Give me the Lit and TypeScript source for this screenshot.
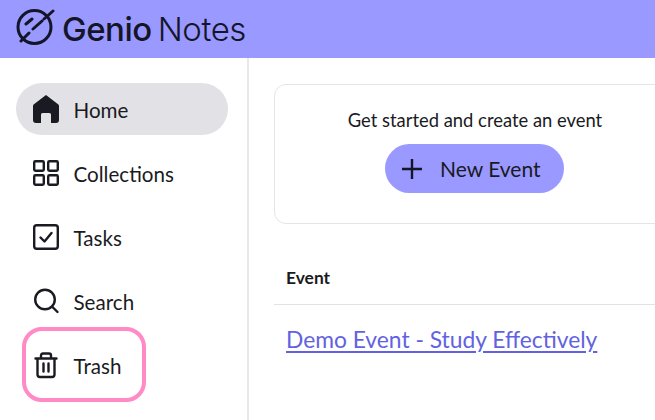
import { LitElement, html, css, svg } from "lit";
import { customElement } from "lit/decorators.js";

const ic = (body: unknown) => html`<svg class="ic" viewBox="0 0 26 26" fill="none" stroke="#1a1a22" stroke-width="2.4" stroke-linecap="round" stroke-linejoin="round">${body}</svg>`;

const items = [
  { label: "Home", active: true, icon: ic(svg`<path fill="#1a1a22" stroke="none" d="M13 -1 L25.4 8.5 Q26 9.2 26 10 V24 Q26 27 23 27 H18 V18.5 Q18 17 16.5 17 H9.5 Q8 17 8 18.5 V27 H3 Q0 27 0 24 V10 Q0 9.2 .6 8.5 Z"/>`) },
  { label: "Collections", icon: ic(svg`<rect x="1.2" y="1.2" width="9.6" height="9.6" rx="1.2"/><rect x="15.2" y="1.2" width="9.6" height="9.6" rx="1.2"/><rect x="1.2" y="15.2" width="9.6" height="9.6" rx="1.2"/><rect x="15.2" y="15.2" width="9.6" height="9.6" rx="1.2"/>`) },
  { label: "Tasks", icon: ic(svg`<rect x="1.2" y="1.2" width="23.6" height="23.6" rx="2.5"/><path d="M7.5 13.5 L11.5 17.5 L18.5 9"/>`) },
  { label: "Search", icon: ic(svg`<circle cx="12" cy="11.5" r="9.8"/><path d="M19 18.5 L24.5 24"/>`) },
  { label: "Trash", icon: ic(svg`<path d="M2.5 6.5 H23.5 M4.5 6.5 V22.5 Q4.5 25 7 25 H19 Q21.5 25 21.5 22.5 V6.5 M8 6 V3.5 Q8 1.5 10 1.5 H16 Q18 1.5 18 3.5 V6 M10.5 11.5 V19.5 M15.5 11.5 V19.5"/>`) },
];

@customElement("app-root")
export class AppRoot extends LitElement {
  static styles = css`
    :host { display: block; position: relative; width: 655px; height: 420px; overflow: hidden; background: #fff; color: #1a1a22; font-family: "Lato", "Noto Sans", sans-serif; }
    .header { height: 58px; background: #9999ff; display: flex; align-items: center; padding-left: 15px; gap: 7px; }
    .logo { width: 40px; height: 40px; flex: none; margin-top: -2px; }
    .brand { font-family: "Inter", sans-serif; font-size: 33px; color: #15152a; display: flex; gap: 6px; line-height: 1; }
    .brand b { font-weight: 500; letter-spacing: -0.5px; }
    .brand span { font-weight: 300; letter-spacing: -0.4px; }
    .body { display: flex; height: 362px; }
    .side { width: 249px; flex: none; box-sizing: border-box; border-right: 2px solid #e8e8ea; padding: 25px 19px 0 16px; display: flex; flex-direction: column; gap: 12px; }
    .item { height: 52px; border-radius: 26px; display: flex; align-items: center; gap: 14.5px; padding-left: 17px; font-size: 20.6px; }
    .item span { padding-top: 2px; }
    .item.active { background: #e2e2e6; }
    .ic { width: 26px; height: 26px; flex: none; overflow: visible; }
    .main { flex: none; width: 406px; padding: 26px 0 0 25px; box-sizing: border-box; }
    .card { width: 402px; height: 140px; box-sizing: border-box; border: 1px solid #e5e5e7; border-radius: 12px; display: flex; flex-direction: column; align-items: center; padding-top: 23px; }
    .card p { margin: 0; font-size: 18.4px; line-height: 24px; }
    .btn { margin: 12px 1px 0 0; width: 179px; height: 49px; border-radius: 25px; background: #9999ff; display: flex; align-items: center; box-sizing: border-box; padding-left: 16px; gap: 17px; font-size: 21px; }
    .btn svg { width: 22px; height: 22px; flex: none; }
    .table { width: 402px; margin-top: 39px; }
    .th { height: 41px; border-bottom: 1px solid #e2e2e4; padding-left: 12px; font-size: 17.4px; font-weight: 700; line-height: 30px; }
    .td { padding: 19px 0 0 12px; }
    a { color: #6262e0; font-size: 22.8px; line-height: 30px; text-decoration: underline; text-underline-offset: 3px; }
    .mark { position: absolute; left: 22px; top: 327px; width: 124px; height: 75px; box-sizing: border-box; border: 4px solid #ff8ac6; border-radius: 20px; pointer-events: none; }
  `;

  render() {
    return html`
      <div class="header">
        <svg class="logo" viewBox="0 0 40 40" fill="none" stroke="#15152a" stroke-width="3" stroke-linecap="round">
          <circle cx="19.5" cy="19" r="16.5"/>
          <path d="M6 33 L14 25 M11 16 L17 11 M18 21 L27 13 M29 11 L38 3" />
        </svg>
        <div class="brand"><b>Genio</b><span>Notes</span></div>
      </div>
      <div class="body">
        <nav class="side">
          ${items.map(i => html`<div class="item ${i.active ? "active" : ""}">${i.icon}<span>${i.label}</span></div>`)}
        </nav>
        <main class="main">
          <section class="card">
            <p>Get started and create an event</p>
            <div class="btn">
              <svg viewBox="0 0 22 22" fill="none" stroke="#15152a" stroke-width="2.4"><path d="M11 1 V21 M1 11 H21"/></svg>
              <span>New Event</span>
            </div>
          </section>
          <div class="table">
            <div class="th">Event</div>
            <div class="td"><a href="#">Demo Event - Study Effectively</a></div>
          </div>
        </main>
      </div>
      <div class="mark"></div>
    `;
  }
}
